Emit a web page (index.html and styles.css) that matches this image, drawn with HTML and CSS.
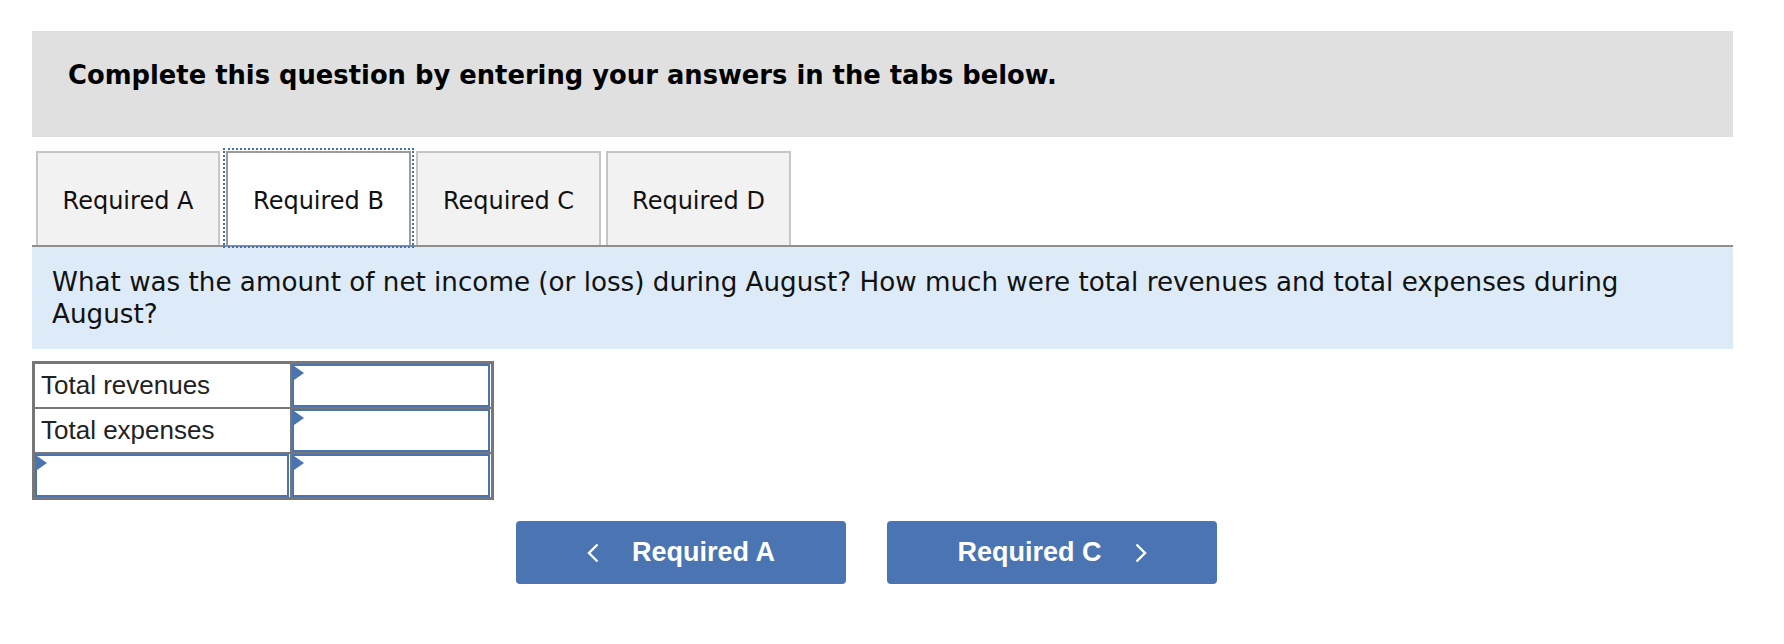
FILE: index.html
```html
<!DOCTYPE html>
<html lang="en">
<head>
<meta charset="utf-8">
<title>Required B</title>
<link rel="stylesheet" href="styles.css">
</head>
<body>
<div class="page">
  <div class="instructions">
    <p>Complete this question by entering your answers in the tabs below.</p>
  </div>

  <div class="tabs">
    <div class="tab">Required A</div>
    <div class="tab active">Required B</div>
    <div class="tab">Required C</div>
    <div class="tab">Required D</div>
  </div>

  <div class="question">
    <p>What was the amount of net income (or loss) during August? How much were total revenues and total expenses during August?</p>
  </div>

  <div class="answer-grid">
    <div class="cell label">Total revenues</div>
    <div class="cell"><div class="input"></div></div>
    <div class="cell label">Total expenses</div>
    <div class="cell"><div class="input"></div></div>
    <div class="cell"><div class="input"></div></div>
    <div class="cell"><div class="input"></div></div>
  </div>

  <div class="nav">
    <button class="nav-btn">
      <svg class="chev" width="12" height="20" viewBox="0 0 12 20"><polyline points="10.5,1.5 2,10 10.5,18.5" fill="none" stroke="#fff" stroke-width="2.4"/></svg>
      <span>Required A</span>
    </button>
    <button class="nav-btn">
      <span>Required C</span>
      <svg class="chev" width="12" height="20" viewBox="0 0 12 20"><polyline points="1.5,1.5 10,10 1.5,18.5" fill="none" stroke="#fff" stroke-width="2.4"/></svg>
    </button>
  </div>
</div>
</body>
</html>
```

FILE: styles.css
```css
html, body {
  margin: 0;
  padding: 0;
  background: #ffffff;
}

.page {
  width: 1701px;
  margin-left: 32px;
  padding-top: 31px;
  font-family: "DejaVu Sans", Verdana, sans-serif;
  color: #111;
}

.instructions {
  background: #e0e0e0;
  height: 106px;
  box-sizing: border-box;
  padding: 29px 36px 0;
}

.instructions p {
  margin: 0;
  font-weight: bold;
  font-size: 25.8px;
  color: #000;
}

.tabs {
  display: flex;
  gap: 5px;
  margin-top: 14px;
  padding-left: 4px;
  border-bottom: 2px solid #8f8f8f;
}

.tab {
  width: 185px;
  height: 94px;
  box-sizing: border-box;
  border: 2px solid #c6c6c6;
  border-bottom: none;
  background: #f2f2f2;
  display: flex;
  align-items: center;
  justify-content: center;
  padding-top: 4px;
  font-size: 24px;
  color: #111;
}

.tab:first-child {
  width: 184px;
  margin-right: 1px;
}

.tab.active {
  background: #ffffff;
  border-color: #9a9a9a;
  outline: 2px dotted #3d6fc4;
  outline-offset: 1px;
}

.question {
  background: #ddeaf7;
  padding: 19px 60px 19px 20px;
}

.question p {
  margin: 0;
  font-size: 26.2px;
  line-height: 32px;
  color: #111;
}

.answer-grid {
  margin-top: 12px;
  display: grid;
  grid-template-columns: 255px 199px;
  grid-auto-rows: 43px;
  gap: 2px;
  padding: 3px;
  background: #777777;
  width: fit-content;
}

.cell {
  background: #ffffff;
  position: relative;
}

.cell.label {
  display: flex;
  align-items: center;
  padding-left: 6px;
  font-family: "Liberation Sans", Arial, sans-serif;
  font-size: 26px;
  color: #222;
}

.input {
  position: relative;
  height: 100%;
  box-sizing: border-box;
  margin: 0 1px 0 0;
  border: 2px solid #4a73b2;
  background: #fff;
}

.input::before {
  content: "";
  position: absolute;
  left: 0;
  top: 0;
  border-left: 10px solid #4a73b2;
  border-top: 7px solid transparent;
  border-bottom: 7px solid transparent;
}

.nav {
  display: flex;
  gap: 41px;
  margin-top: 21px;
  padding-left: 484px;
}

.nav-btn {
  width: 330px;
  height: 63px;
  border: none;
  border-radius: 4px;
  background: #4a74b2;
  color: #ffffff;
  display: flex;
  align-items: center;
  justify-content: center;
  gap: 33px;
  font-family: "Liberation Sans", Arial, sans-serif;
  font-weight: bold;
  font-size: 27px;
  padding: 0;
}

.chev {
  display: block;
}
```
